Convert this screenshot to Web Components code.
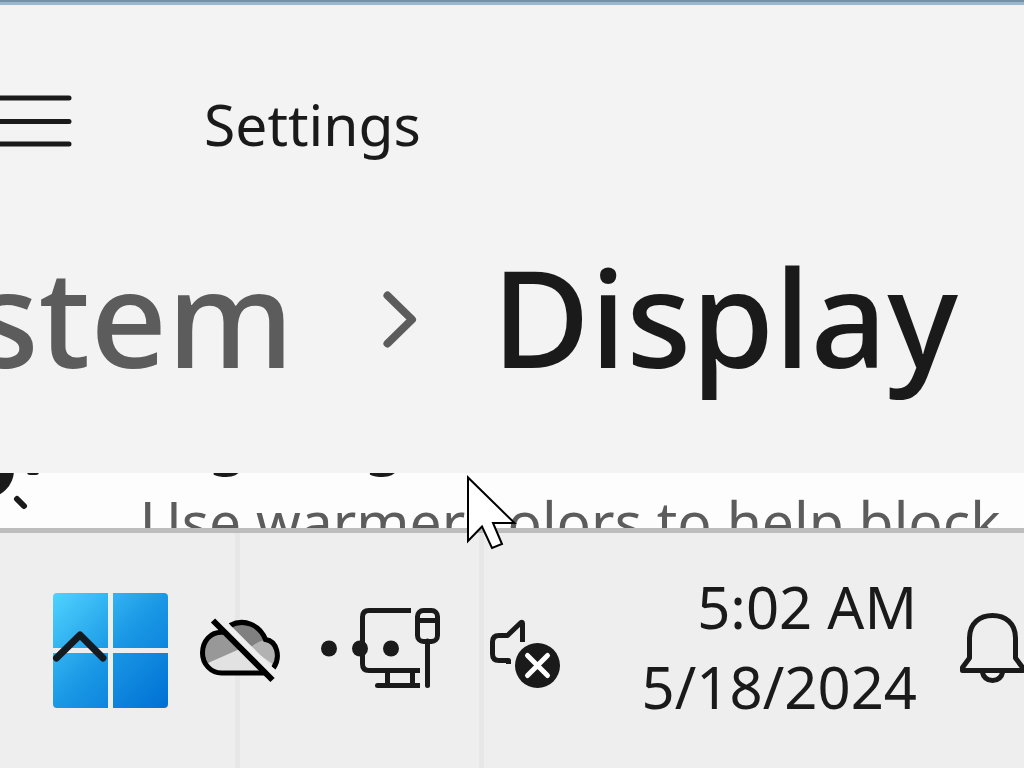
<!DOCTYPE html>
<html lang="en">
<head>
<meta charset="utf-8">
<title>Settings</title>
<style>
    html, body {
        margin: 0;
        height: 100%;
        overflow: hidden;
    }
    body {
        font-family: "Noto Sans", "Open Sans", sans-serif;
        color: #1a1a1a;
        background: #f3f3f3;
    }
</style>
</head>
<body>
<desk-top>
    <settings-window>
        <crumb-bar parent="System">Display</crumb-bar>
        <setting-card heading="Night light">Use warmer colors to help block</setting-card>
    </settings-window>
    <task-bar slot="taskbar">
        <tray-clock time="5:02 AM" date="5/18/2024"></tray-clock>
    </task-bar>
</desk-top>

<script>
const resetStyle = `
    * {
        box-sizing: border-box;
    }
    svg {
        display: block;
        flex: none;
        overflow: visible;
    }
    button {
        display: block;
        flex: none;
        margin: 0;
        padding: 0;
        border: 0;
        background: none;
        color: inherit;
        font: inherit;
    }
    a {
        color: inherit;
        text-decoration: none;
    }
    h1, h2, p {
        margin: 0;
    }
`;

class DeskTop extends HTMLElement {

    connectedCallback() {
        const shadow = this.attachShadow({ mode: 'open' });
        shadow.innerHTML = `
            <style>
                ${resetStyle}
                :host {
                    display: flex;
                    flex-direction: column;
                    height: 100vh;
                    overflow: hidden;
                }
                .wallpaper {
                    flex: none;
                    height: 5px;
                    background: linear-gradient(#7590a5 2px, #9ab7d0 2px);
                }
                .pointer {
                    position: absolute;
                    left: 466px;
                    top: 474px;
                    pointer-events: none;
                }
            </style>
            <div class="wallpaper"></div>
            <slot></slot>
            <slot name="taskbar"></slot>
            <svg class="pointer" width="52" height="76" viewBox="0 0 52 76" aria-hidden="true">
                <path d="M2 3.5V67L16 52.5L26 74L36 70L27 49H48.5Z" fill="#fff" stroke="#000" stroke-width="2"/>
            </svg>
        `;
    }

}

class SettingsWindow extends HTMLElement {

    connectedCallback() {
        const shadow = this.attachShadow({ mode: 'open' });
        shadow.innerHTML = `
            <style>
                ${resetStyle}
                :host {
                    display: flex;
                    flex: 1;
                    flex-direction: column;
                    min-height: 0;
                    overflow: hidden;
                    background: #f3f3f3;
                }
                header {
                    display: flex;
                    flex: none;
                    gap: 132px;
                    padding-top: 79px;
                    font-size: 57px;
                    line-height: 80px;
                }
            </style>
            <header>
                <button aria-label="Open navigation">
                    <svg width="72" height="80" viewBox="0 0 72 80" fill="none" stroke="#1a1a1a" stroke-width="5" stroke-linecap="round">
                        <path d="M-20 14H69M-20 37.5H69M-20 60H69"/>
                    </svg>
                </button>
                <span>Settings</span>
            </header>
            <slot></slot>
        `;
    }

}

class CrumbBar extends HTMLElement {

    connectedCallback() {
        const shadow = this.attachShadow({ mode: 'open' });
        shadow.innerHTML = `
            <style>
                ${resetStyle}
                :host {
                    display: block;
                    flex: none;
                    padding: 62px 0 67px;
                }
                nav {
                    display: flex;
                    align-items: center;
                    font-size: 134px;
                    line-height: 180px;
                    font-weight: 500;
                }
                .parent {
                    display: flex;
                    justify-content: flex-end;
                    width: 294px;
                    flex: none;
                    color: #5c5c5c;
                }
                svg {
                    margin: 0 76px 0 90px;
                }
                h1 {
                    font: inherit;
                }
            </style>
            <nav>
                <a class="parent" href="#">${this.getAttribute('parent')}</a>
                <svg width="32" height="60" viewBox="0 0 32 60" fill="none" stroke="#5c5c5c" stroke-width="8" stroke-linecap="round" stroke-linejoin="round">
                    <path d="M3.5 9.500L28 33.500L3.5 57.500"/>
                </svg>
                <h1><slot></slot></h1>
            </nav>
        `;
    }

}

class SettingCard extends HTMLElement {

    connectedCallback() {
        const shadow = this.attachShadow({ mode: 'open' });
        shadow.innerHTML = `
            <style>
                ${resetStyle}
                :host {
                    display: block;
                    flex: 1;
                    min-height: 0;
                    overflow: hidden;
                    background: #fdfdfd;
                }
                /* the list is scrolled, only the lower part of the card shows */
                .card {
                    display: flex;
                    gap: 100px;
                    margin-top: -80px;
                    white-space: nowrap;
                }
                h2 {
                    margin-bottom: 4px;
                    font-size: 66px;
                    line-height: 84px;
                    font-weight: 400;
                }
                p {
                    color: #5c5c5c;
                    font-size: 57px;
                    line-height: 80px;
                }
            </style>
            <div class="card">
                <svg width="40" height="120" viewBox="0 0 40 120" stroke="#1a1a1a" stroke-width="6" stroke-linecap="round">
                    <circle cx="-14" cy="77" r="28" fill="#1a1a1a" stroke="none"/>
                    <path d="M30 79H36M17 106L24 113"/>
                </svg>
                <div>
                    <h2>${this.getAttribute('heading')}</h2>
                    <p><slot></slot></p>
                </div>
            </div>
        `;
    }

}

class TrayClock extends HTMLElement {

    connectedCallback() {
        const shadow = this.attachShadow({ mode: 'open' });
        shadow.innerHTML = `
            <style>
                ${resetStyle}
                :host {
                    display: block;
                    flex: none;
                    padding-bottom: 2px;
                }
                button {
                    font-size: 58px;
                    line-height: 80px;
                    text-align: right;
                }
                span {
                    display: block;
                }
            </style>
            <button>
                <span>${this.getAttribute('time')}</span>
                <span>${this.getAttribute('date')}</span>
            </button>
        `;
    }

}

class TaskBar extends HTMLElement {

    connectedCallback() {
        const shadow = this.attachShadow({ mode: 'open' });
        shadow.innerHTML = `
            <style>
                ${resetStyle}
                :host {
                    display: grid;
                    flex: none;
                    border-top: 5px solid #bdbdbd;
                    background: #eee;
                }
                /* the tray lies over the app buttons */
                .apps, .tray {
                    grid-area: 1 / 1;
                    display: flex;
                    align-items: center;
                    min-width: 0;
                }
                .cell {
                    display: flex;
                    align-items: center;
                    align-self: stretch;
                    border-right: 5px solid #e7e7e7;
                    padding: 60px 80px 60px 81px;
                }
                .cell.start {
                    padding: 60px 67px 60px 53px;
                }
                .tray {
                    padding-bottom: 5px;
                    padding-left: 53px;
                }
                .cloud {
                    margin-left: 93px;
                }
                .network {
                    margin-left: 80px;
                }
                .volume {
                    margin-left: 50px;
                }
                ::slotted(tray-clock) {
                    margin-left: auto;
                }
                .bell {
                    margin-left: 43px;
                }
            </style>
            <div class="apps">
                <div class="cell start">
                    <button aria-label="Start">
                        <svg width="115" height="115" viewBox="0 0 115 115">
                            <defs>
                                <linearGradient id="blue" gradientUnits="userSpaceOnUse" x1="0" y1="0" x2="115" y2="115">
                                    <stop offset="0" stop-color="#4fd3ff"/>
                                    <stop offset=".5" stop-color="#1a98e5"/>
                                    <stop offset="1" stop-color="#0070d4"/>
                                </linearGradient>
                            </defs>
                            <path fill="url(#blue)" d="M4 0H55V55H0V4Q0 0 4 0ZM60 0H111Q115 0 115 4V55H60ZM0 60H55V115H4Q0 115 0 111ZM60 60H115V111Q115 115 111 115H60Z"/>
                        </svg>
                    </button>
                </div>
                <div class="cell">
                    <button aria-label="More apps">
                        <svg width="78" height="20" viewBox="0 0 78 20" fill="#1a1a1a">
                            <circle cx="8" cy="7.5" r="8"/>
                            <circle cx="39" cy="7.5" r="8"/>
                            <circle cx="70" cy="7.5" r="8"/>
                        </svg>
                    </button>
                </div>
            </div>
            <div class="tray">
                <button class="hidden-icons" aria-label="Show hidden icons">
                    <svg width="54" height="80" viewBox="0 0 54 80" fill="none" stroke="#131a22" stroke-width="7" stroke-linecap="round" stroke-linejoin="round">
                        <path d="M3.5 50L27 27L50 50"/>
                    </svg>
                </button>
                <button class="cloud" aria-label="OneDrive">
                    <svg width="80" height="80" viewBox="0 0 80 80" fill="none">
                        <path d="M21.5 65A19.5 20 0 0 1 9 31Q16 23.5 27 24.5Q31 15 41 14.5Q58 15 65.5 31.5Q77.5 34 77.5 47Q77 62 63 65Z" fill="#e2e2e2"/>
                        <path d="M8 55Q2 50 2.5 44Q4 26 21 24.5H27L42 40Z" fill="#989898"/>
                        <path d="M29 20Q35 14.5 42 14.5Q57 15 65.5 32L50 40Z" fill="#808080"/>
                        <path d="M50 40Q62 29 70 34Q78 39 77.5 50L74 57Z" fill="#b2b2b2"/>
                        <path d="M25 24.5C10 22.5 2.5 34 2.5 45C2.5 56 11 65 21.5 65H64" stroke="#000" stroke-width="5"/>
                        <path d="M30 17.5C44 10 60 17 65.5 31.5C77 33 81 49 73.5 60" stroke="#000" stroke-width="5"/>
                        <path d="M23 14L76 67" stroke="#eee" stroke-width="6"/>
                        <path d="M13 12.500L72.5 72" stroke="#000" stroke-width="6"/>
                    </svg>
                </button>
                <button class="network" aria-label="Network">
                    <svg width="80" height="80" viewBox="0 0 80 80" fill="none" stroke="#1a1a1a" stroke-width="5">
                        <path d="M51 2.5H9Q2.5 2.5 2.5 9V56Q2.5 62.5 9 62.5H60M27.5 62.5V77.5M52.5 62.5V77.5"/>
                        <path d="M60 77.5H17.5"/>
                        <circle cx="17.5" cy="77.5" r="2.5" fill="#1a1a1a" stroke="none"/>
                        <rect x="57.5" y="2.5" width="20" height="31" rx="6"/>
                        <path d="M57.5 12.5H77.5"/>
                        <path d="M67.5 33V77.5" stroke-linecap="round"/>
                    </svg>
                </button>
                <button class="volume" aria-label="Volume muted">
                    <svg width="70" height="80" viewBox="0 0 70 80" fill="none" stroke="#1a1a1a" stroke-width="5">
                        <path d="M18.5 56V52.5H9Q2.5 52.5 2.5 46V34Q2.5 27.5 9 27.5H17.5L31 14.5Q32.5 13.5 32.5 15.5V34" stroke-linejoin="round"/>
                        <circle cx="47.5" cy="57.5" r="22.5" fill="#1a1a1a" stroke="none"/>
                        <path d="M37.5 47.5L57.5 67.5M57.5 47.5L37.5 67.5" stroke="#fff" stroke-linecap="round"/>
                    </svg>
                </button>
                <slot></slot>
                <button class="bell" aria-label="Notifications">
                    <svg width="64" height="80" viewBox="0 0 64 80" fill="none" stroke="#1a1a1a" stroke-width="5" stroke-linejoin="round">
                        <path d="M9.5 50V30C9.5 15 20 7.5 32.5 7.5S55.5 15 55.5 30V50L62.5 59.5V62.5H2.5V59.5Z"/>
                        <path d="M22 63Q24 72.5 32.5 72.5T43 63"/>
                    </svg>
                </button>
            </div>
        `;
    }

}

customElements.define('desk-top', DeskTop);
customElements.define('settings-window', SettingsWindow);
customElements.define('crumb-bar', CrumbBar);
customElements.define('setting-card', SettingCard);
customElements.define('tray-clock', TrayClock);
customElements.define('task-bar', TaskBar);
</script>
</body>
</html>
